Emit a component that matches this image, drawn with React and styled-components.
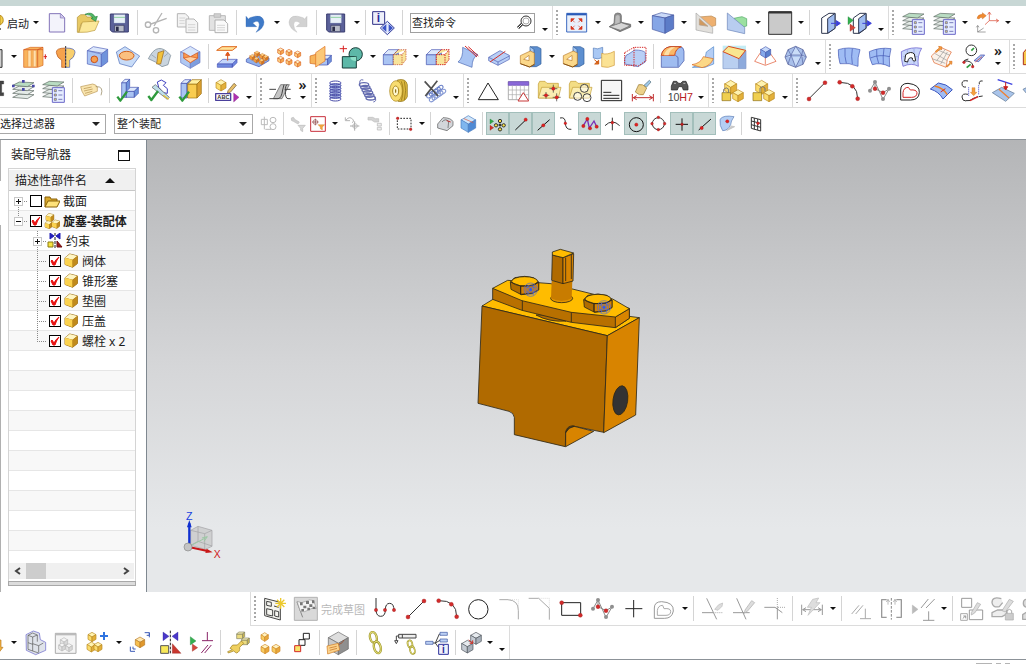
import React from "react";
import styled, { createGlobalStyle, css } from "styled-components";

const Global = createGlobalStyle`
  * { box-sizing: border-box; }
  html, body { margin: 0; }
  body, button, input, select {
    font-family: "Noto Sans", "Noto Sans CJK SC", sans-serif;
    font-size: 12px;
    color: #1c1c1c;
  }
`;

/* ---------- drawing primitives ---------- */

const P = ({ d, f = "none", s = "#333", w = 3, da }) => (
  <path d={d} fill={f} stroke={s} strokeWidth={w} strokeDasharray={da} strokeLinejoin="round" />
);
const D = ({ x, y, r = 6, c = "#d22b2b", s = "#9c1c1c" }) => (
  <circle cx={x} cy={y} r={r} fill={c} stroke={s} strokeWidth="1" />
);

const blue = ["#dde8fc", "#aac4f3", "#6f93dc", "#3f4fae"];
const yellow = ["#fff3b0", "#fbdc6c", "#e3b03a", "#b98a20"];
const orange = ["#fff0c8", "#fccf80", "#f8ab50", "#dc6c2c"];
const pale = ["#f5f5f5", "#e6e6e6", "#d8d8d8", "#b8b8b8"];
const slate = ["#e6eaee", "#c6ccd4", "#a8b0ba", "#4a5058"];

const Cube = ({ x, y, r, p = yellow, w = 2 }) => {
  const a = Math.round(r * 0.87);
  const h = Math.round(r * 0.5);
  return (
    <g stroke={p[3]} strokeWidth={w} strokeLinejoin="round">
      <path d={`M${x} ${y - r}l${a} ${h}l${-a} ${h}l${-a} ${-h}z`} fill={p[0]} />
      <path d={`M${x - a} ${y - h}l${a} ${h}v${r}l${-a} ${-h}z`} fill={p[1]} />
      <path d={`M${x + a} ${y - h}l${-a} ${h}v${r}l${a} ${-h}z`} fill={p[2]} />
    </g>
  );
};
const Block = ({ x, y, w, h, d, p = blue, k = 2 }) => (
  <g stroke={p[3]} strokeWidth={k} strokeLinejoin="round">
    <path d={`M${x} ${y + d}h${w}v${h}h${-w}z`} fill={p[1]} />
    <path d={`M${x} ${y + d}l${d} ${-d}h${w}l${-d} ${d}z`} fill={p[0]} />
    <path d={`M${x + w} ${y + d}l${d} ${-d}v${h}l${-d} ${d}z`} fill={p[2]} />
  </g>
);
const Floppy = ({ x, y }) => (
  <>
    <P d={`M${x} ${y}h54v54h-48l-6 -6z`} f="#5b6199" s="#3a3d70" />
    <P d={`M${x + 11} ${y + 2}h33v25h-33z`} f="#e8f0f8" s="#9fb0c8" w={1} />
    <P d={`M${x + 11} ${y + 10}h33`} s="#8fd0a0" />
    <P d={`M${x + 13} ${y + 34}h28v19h-28z`} f="#b8bcc8" s="#33365c" w={2} />
    <P d={`M${x + 17} ${y + 38}h8v13h-8z`} f="#2a2c48" s="none" />
  </>
);
const Layers = ({ x, y, n = 4, list }) => (
  <>
    {Array.from({ length: n }, (_, i) => n - 1 - i).map((i) => (
      <path key={i} d={`M${x - 32} ${y + i * 12}l20 -10l44 2l-20 12z`}
        fill={i === 0 ? "#b9dcc2" : "#e4ebe7"} stroke="#5a6660" strokeWidth="2" strokeLinejoin="round" />
    ))}
    {list && (
      <>
        <P d={`M${x - 3} ${y + 9}h36v44h-36z`} f="#e6edff" s="#6a67c8" />
        {[18, 31, 44].map((o) => (
          <g key={o}>
            <P d={`M${x + 3} ${y + o - 3}h6v6h-6z`} f="#f0e070" s="#55549a" w={2} />
            <P d={`M${x + 15} ${y + o}h12`} s="#44449c" w={2} />
          </g>
        ))}
      </>
    )}
  </>
);
const Folder = ({ x, y }) => (
  <>
    <P d={`M${x} ${y + 8}l4 -8h16l6 6h34v44h-60z`} f="#f3dd84" s="#c19c32" w={2} />
    <P d={`M${x} ${y + 50}l10 -32h58l-8 32z`} f="#fbeeb2" s="#c19c32" w={2} />
  </>
);
const Check = ({ x, y }) => (
  <P d={`M${x} ${y}l9 12l20 -27`} s="#2e9a3c" w={7} />
);
const RedTri = ({ x, y }) => (
  <P d={`M${x} ${y}l16 11l-16 11z`} f="#d4473c" s="#932018" w={1} />
);
const Letters = ({ x, y, size, c = "#2b2b9a", b, children }) => (
  <text x={x} y={y} fontSize={size} fill={c} stroke="none" fontWeight={b ? 700 : 400} fontFamily='"Liberation Sans", sans-serif'>{children}</text>
);
/* studio spline: a control polygon with its outer handles and two points on the curve */
const Poles = ({ x, y }) => (
  <>
    <P d={`M${x - 24} ${y + 3}L${x - 9} ${y - 23}L${x - 9} ${y - 3}L${x + 15} ${y + 9}L${x + 33} ${y - 2}M${x - 9} ${y - 23}L${x + 15} ${y + 29}L${x + 33} ${y - 2}`} s="#8a8a8a" />
    {[[-24, 3], [-9, -23], [15, 28], [33, -3]].map(([a, b]) => <D key={a} x={x + a} y={y + b} r={6} c="#8f8f8f" s="none" />)}
    {[[-9, -3], [15, 9]].map(([a, b]) => <D key={a} x={x + a} y={y + b} r={6} />)}
  </>
);
const Spring = ({ x, y, n, c = "#3c3f92", rx = 17, step = 9, tilt = 0, w = 4 }) => (
  <g fill="none" stroke={c} strokeWidth={w}>
    {Array.from({ length: n }, (_, i) => (
      <ellipse key={i} cx={x + i * tilt} cy={y + i * step} rx={rx} ry="6" />
    ))}
  </g>
);
const TrimBody = ({ x }) => (
  <>
    <P d={`M${x + 29} 140h22l11 6v46l-14 8h-19z`} f="#5d8fd0" s="#2f5c98" w={2} />
    <P d={`M${x + 29} 140l12 8v50`} f="#a8c8f0" s="#2f5c98" w={2} />
    <P d={`M${x} 167l30 -14l12 6v34l-14 8l-28 -10z`} f="#fbd88a" s="#b87a28" w={2} />
    <P d={`M${x + 10} 178l16 -12v16z`} f="#fff" s="#b87a28" w={2} />
    <P d={`M${x} 191l28 10l14 -8`} s="#8a5414" w={3} />
  </>
);
const Linked = ({ x, y, rx, ry, w }) => (
  <>
    <ellipse cx={x} cy={y} rx={rx} ry={ry} fill="none" stroke="#9a9228" strokeWidth={w} transform={`rotate(-15 ${x} ${y})`} />
    <ellipse cx={x} cy={y} rx={rx} ry={ry} fill="none" stroke="#e2dc78" strokeWidth={w / 2} transform={`rotate(-15 ${x} ${y})`} />
  </>
);

/* ---------- icons: at = centre, three units to a pixel ---------- */

const icons = {
  /* standard bar */
  new: { at: [172.5, 67.5], g: <><P d="M148 41h34l12 12v43h-46z" f="#f3f3fb" s="#8273b8" /><P d="M181 41v13h13" f="#cfc8ea" s="#8273b8" w={2} /></> },
  open: { at: [265.5, 67.5], g: <><P d="M232 52l10 -8h14l5 7h22v12l-40 8l-6 26h-5z" f="#e8c964" s="#b08f35" w={2} /><P d="M237 97l10 -31l50 -3l-12 28q-24 8 -48 6z" f="#fbe899" s="#b99738" w={2} /><P d="M255 43q22 -10 30 8l7 -2l-5 15l-14 -9l6 -2q-8 -10 -24 -10z" f="#4fb763" s="#23803a" w={2} /></> },
  save: { at: [358.5, 67.5], g: <Floppy x={331} y={42} /> },
  cut: { at: [469.5, 67.5], g: <g fill="none" stroke="#b4b4b4" strokeWidth="4"><path d="M453 72L500 55M462 78L486 39" /><circle cx="444" cy="74" r="8" /><circle cx="468" cy="91" r="8" /></g> },
  copy: { at: [562.5, 67.5], g: <><P d="M532 41h24l10 10v30h-34z" f="#f4f4f4" s="#b5b5b5" /><P d="M558 57h24l11 11v30h-35z" f="#f4f4f4" s="#b5b5b5" /><P d="M538 54h18M538 62h16M538 70h16M564 74h22M564 82h22M564 90h22" s="#c4c4c4" w={2} /></> },
  paste: { at: [655.5, 67.5], g: <><P d="M628 47h48v44h-48z" f="#e2e2e2" s="#b9b9b9" /><P d="M642 41h20v11h-20z" f="#d0d0d0" s="#b0b0b0" w={2} /><P d="M645 60h27l11 11v27h-38z" f="#fafafa" s="#b0b0b0" /><P d="M651 76h24M651 83h24M651 90h24" s="#c4c4c4" w={2} /></> },
  undo: { at: [766.5, 67.5], g: <P d="M738 49v31h32l-12 -11q18 -12 20 5q0 12 -10 23q24 -12 24 -31q-4 -27 -42 -13q-4 2 -4 5z" f="#3f7ac8" s="#2f62ae" w={1} /> },
  redo: { at: [895.5, 67.5], g: <P d="M921 49v31h-32l12 -11q-18 -12 -20 5q0 12 10 23q-24 -12 -24 -31q4 -27 42 -13q4 2 4 5z" f="#d2d2d2" s="#b4b4b4" w={1} /> },
  save2: { at: [1006.5, 67.5], g: <Floppy x={980} y={42} /> },
  command: { at: [127.5, 67.5], g: <><P d="M92 35h36v38h-36z" f="#eef0fa" s="#2e2f86" /><Letters x={104} y={66} size={36} b>i</Letters><P d="M115 84l21 -20l21 20l-21 20z" f="#e4eafc" s="#35409c" /><P d="M133 72l-13 12l13 12zM140 72l13 12l-13 12z" f="#3c55c8" s="none" /></> },
  fit: { at: [703.5, 67.5], g: <><P d="M674 40h60v56h-60z" f="#e9f0fb" s="#3d6ac0" /><P d="M675 43h58" s="#2a5ab8" w={6} /><g fill="#d83820" stroke="#d83820" strokeWidth="2"><path d="M687 56h10l-10 10zM720 56h-10l10 10zM687 88h10l-10 -10zM720 88h-10l10 -10z" /><path d="M690 59l8 8M717 59l-8 8M690 85l8 -8M717 85l-8 -8" /></g></> },
  orient: { at: [832.5, 67.5], g: <><P d="M802 80l14 -10l2 -25q0 -5 9 -6q11 0 11 8v20l28 6v8l-32 14z" f="#8e8e8e" s="#5e5e5e" w={2} /><P d="M802 80l33 11l30 -14l-27 -9z" f="#d6d6d6" s="#666" w={2} /><P d="M820 48q8 -8 14 0v20l-16 6z" f="#bdbdbd" s="#777" w={1} /></> },
  shaded: { at: [961.5, 67.5], g: <><P d="M931 47l27 -9l37 7l-26 9z" f="#cbdaf8" s="#4355a0" w={2} /><P d="M931 47l38 7v46l-38 -12z" f="#86a6e6" s="#4355a0" w={2} /><P d="M969 54l26 -9v41l-26 14z" f="#5c7cc8" s="#4355a0" w={2} /></> },
  clip: { at: [64.5, 67.5], g: <><P d="M44 51l38 -3l13 6v22l-25 8l-26 -6z" f="#eeb070" s="#b88850" w={2} /><P d="M36 39l50 44v17l-50 -10z" f="#e2e0dc" s="#a8a8a8" w={2} /><P d="M46 56l26 23l-26 -4z" f="#d09a60" s="#b0a090" w={2} /></> },
  editclip: { at: [157.5, 67.5], g: <><P d="M150 55l24 -5l14 6v22l-24 6z" f="#9be0a0" s="#4ca860" w={2} /><P d="M130 39l52 43v19l-52 -12z" f="#b8cdf0" s="#6a83b8" w={2} /></> },
  background: { at: [286.5, 67.5], g: <><P d="M254 36h69v67h-69z" f="#cacaca" s="#333" /><P d="M254 37h69" s="#333" w={7} /></> },
  exit: { at: [433.5, 67.5], g: <><P d="M413 54l22 -14h18v45l-22 15h-18z" f="#fff" s="#2f3850" /><P d="M431 56l22 -16v45l-22 15z" f="#9fbcf0" s="#2f3850" /><P d="M441 70h16m0 -8l12 8l-12 8z" f="#3a40d8" s="#3a40d8" /></> },
  enter: { at: [526.5, 67.5], g: <><P d="M508 54l20 -14h18v45l-20 15h-18z" f="#fff" s="#2f3850" /><P d="M524 56l22 -16v45l-22 15z" f="#9fbcf0" s="#2f3850" /><P d="M535 70h15m0 -8l12 8l-12 8z" f="#3a40d8" s="#3a40d8" /><P d="M492 50l16 11l-16 13z" f="#34b050" s="#187a30" w={1} /><RedTri x={498} y={72} /></> },
  layerset: { at: [685.5, 67.5], g: <Layers x={688} y={50} list /> },
  layerview: { at: [778.5, 67.5], g: <Layers x={781} y={50} list /> },
  csys: { at: [907.5, 67.5], g: <><P d="M879 55q2 -12 16 -12v-5l12 9l-12 10v-5q-8 0 -10 5z" f="#f08a30" s="#b85c10" w={1} /><P d="M916 38v24h27M916 62l-13 12M911 44l5 -8l5 8M936 57l8 5l-8 5" s="#d84028" w={2} /><P d="M881 78v18h24M881 96l18 -12M877 82l4 -6l4 6" s="#777" w={2} /></> },

  /* feature bar */
  extrude: { at: [106.5, 169.5], g: <><P d="M71 149l20 -7h38v54l-16 6h-42z" f="#f9b35c" s="#d8661c" w={2} /><P d="M84 151h9v49h-9zM100 151h8v49h-8z" f="#ffe0ac" s="#dd7a2c" w={1} /><P d="M71 149l58 0M113 149l16 -7M113 149v52" s="#cf4c1c" w={2} /><P d="M131 170h10m-5 -7v14" s="#d42020" /></> },
  revolve: { at: [199.5, 169.5], g: <><P d="M169 158q-2 -14 28 -14v58h-12v-22q-14 -6 -16 -22z" f="#f6a24c" s="#b5541a" w={2} /><P d="M225 158q2 -14 -28 -14v58h12v-22q14 -6 16 -22z" f="#f9cf6c" s="#3f58b4" w={2} /><P d="M197 138v70" s="#333" da="6 4" /></> },
  hole: { at: [292.5, 169.5], g: <><P d="M262 152l18 -12l43 8l-12 12z" f="#dde8fc" s="#4f5fb8" w={2} /><P d="M262 152l42 10v38l-42 -8z" f="#aac4f3" s="#4f5fb8" w={2} /><P d="M304 162l19 -14v38l-19 14z" f="#6f93dc" s="#4f5fb8" w={2} /><circle cx="283" cy="178" r="10" fill="#f8a050" stroke="#c8501c" strokeWidth="3" /></> },
  boss: { at: [385.5, 169.5], g: <><P d="M349 156l26 -16l44 28l-24 33l-36 -10z" f="#c8dcf8" s="#4d6cb8" w={2} /><ellipse cx="380" cy="167" rx="22" ry="13" fill="#fbc080" stroke="#d0601c" strokeWidth="3" /></> },
  flange: { at: [478.5, 169.5], g: <><P d="M445 176q28 -56 67 -10l-8 28l-18 6l-20 -14z" f="#c9d4de" s="#70808c" w={2} /><P d="M474 158l18 -6l-10 40h-12z" f="#f2c23c" s="#9a6414" w={2} /><P d="M454 164l14 10M504 160l-12 10" s="#8896a4" w={2} /></> },
  pocket: { at: [571.5, 169.5], g: <><Cube x={571} y={172} r={33} p={["#d8e6fb", "#b0c8f2", "#7e9ede", "#6878c4"]} /><P d="M551 158l20 12l22 -12v16l-22 14l-20 -14z" f="#fb9a4c" s="#d4541c" w={2} /><P d="M551 174l20 -4l22 4l-22 14z" f="#fdd0a0" s="#d4541c" w={2} /></> },
  emboss: { at: [682.5, 169.5], g: <><P d="M650 151l16 -11h45l-14 11z" f="#ffe296" s="#e06a20" /><P d="M652 192l16 -14h43l-14 14z" f="#c4d6fa" s="#4a54b8" w={2} /><P d="M652 192h45v10h-45zM697 192l14 -14v10l-14 14z" f="#6f8ae0" s="#4a54b8" w={2} /><P d="M683 182v-16m-6 0l6 -10l6 10z" f="#e8601c" s="#d8501c" /></> },
  pattern: { at: [775.5, 169.5], g: <><P d="M739 178l32 -18l36 14v8l-30 18l-38 -14z" f="#8fb0ec" s="#3f4fae" w={2} />{[[757, 172], [771, 162], [787, 169], [769, 180], [785, 185], [797, 174]].map(([x, y]) => <Cube key={x} x={x} y={y} r={9} p={["#ffd080", "#f8a040", "#d87820", "#b8601c"]} w={1} />)}</> },
  geometry: { at: [868.5, 169.5], g: <>{[[842, 154], [867, 158], [893, 163], [842, 179], [867, 185], [893, 191]].map(([x, y]) => <Cube key={`${x}${y}`} x={x} y={y} r={10} p={orange} />)}</> },
  mirror: { at: [961.5, 169.5], g: <><P d="M930 168l28 -8v34l-28 -4z" f="#f7b45a" s="#d0661c" w={2} /><Block x={957} y={166} w={26} h={18} d={11} /><P d="M947 158l28 -19v44l-28 18z" f="#fbc878" s="#e07020" w={2} /></> },
  unite: { at: [28.5, 169.5], g: <><circle cx="41" cy="163" r="20" fill="#5db8a8" stroke="#173d38" strokeWidth="3" /><P d="M1 170h42v34h-42z" f="#5db8a8" s="#173d38" /><P d="M25 172q0 10 18 12v-14z" f="#8ee0c8" s="none" /><P d="M-7 146h22m-11 -9v20" s="#d82020" /></> },
  subtract: { at: [157.5, 169.5], g: <><Block x={124} y={149} w={30} h={30} d={15} /><P d="M154 164l15 -15h23v30l-12 15h-26zM154 164h26l12 -15M180 164v30" f="#f8e49a" s="#c03a1c" w={2} da="4 3" /></> },
  intersect: { at: [286.5, 169.5], g: <><Block x={253} y={149} w={30} h={30} d={15} /><P d="M283 164l15 -15h23v30l-12 15h-26zM283 164h26l12 -15M309 164v30" f="#f8e49a" s="#d42020" w={3} da="4 3" /></> },
  trimsheet: { at: [379.5, 169.5], g: <><P d="M362 142l46 22q-18 8 -18 38l-42 -16q16 -12 14 -44z" f="#a9c4f3" s="#4a68b4" w={2} /><P d="M369 138l36 33M379 140l30 28" s="#d42828" /></> },
  splitbody: { at: [472.5, 169.5], g: <><P d="M440 172l34 -20l28 14v12l-34 18l-28 -14z" f="#b9cff6" s="#4a5cb0" w={2} /><P d="M440 172l28 14l34 -18M468 186v10" s="#4a5cb0" w={2} /><P d="M444 186l46 -32" s="#d43028" /></> },
  trimbody: { at: [565.5, 169.5], g: <TrimBody x={535} /> },
  trimextend: { at: [694.5, 169.5], g: <TrimBody x={664} /> },
  replace: { at: [787.5, 169.5], g: <><P d="M754 144q12 6 28 -2v30q-14 8 -28 2z" f="#a9c8f4" s="#5078b8" w={2} /><P d="M779 160q16 6 38 -6v42q-18 10 -38 4z" f="#fbe294" s="#cf9a3c" w={2} /><P d="M757 179l12 10m1 -8v11h-12z" f="#e87a20" s="#cf5a14" w={3} /></> },
  shell: { at: [880.5, 169.5], g: <><P d="M860 162l18 -12q26 0 32 8v28l-22 14l-40 -8v-16q4 -14 12 -14z" f="#b9cff6" s="#4a5cb0" w={2} /><P d="M848 158l28 -16h36v40l-26 18M848 158v38h38M876 142v58" s="#d42828" da="4 3" /></> },
  blend: { at: [991.5, 169.5], g: <><P d="M958 166q4 -22 26 -26h30q12 2 12 14v28l-16 20h-52z" f="#9fbcf0" s="#3e4fa0" w={2} /><P d="M958 166q4 -22 26 -26h34q-18 6 -20 26z" f="#fbb868" s="#d04a1c" /><P d="M966 166q4 -16 22 -24h12q-18 8 -20 24z" f="#fde0a8" s="none" /><P d="M1000 166l8 6v28" s="#3e4fa0" w={2} /></> },
  blend2: { at: [58.5, 169.5], g: <><P d="M89 140v52l-26 10h-38q40 -10 42 -46z" f="#b4cdf5" s="#4d86c8" w={2} /><P d="M24 194q26 -4 34 -24l30 6q-8 22 -34 27z" f="#fcd886" s="#d8661c" w={2} /></> },
  chamfer: { at: [151.5, 169.5], g: <><P d="M116 137h70v69h-70z" f="#c4ecf4" s="none" /><P d="M117 155l47 16v35h-47z" f="#b9cff0" s="#8a9cc8" w={2} /><P d="M164 172l22 -20v54h-22z" f="#8daadc" s="#8a9cc8" w={2} /><P d="M117 155l16 -16l52 12l-20 25z" f="#f9e690" s="#d84a20" /></> },
  draft: { at: [244.5, 169.5], g: <><P d="M212 184l20 -30M276 184l-22 -30M212 184l32 12l32 -12M244 160v34" s="#e05028" w={2} /><Cube x={245} y={157} r={17} p={["#c7dafa", "#86a9ea", "#5a7fcc", "#4a5cb0"]} /></> },
  facet: { at: [337.5, 169.5], g: <><P d="M335 139l22 10l10 22l-10 22l-22 9l-23 -9l-9 -22l9 -22z" f="#a9c0ea" s="#44508c" w={2} /><P d="M335 139l-14 26l14 37l18 -37zM303 171l18 -6h32l14 6M312 149l9 16M357 149l-4 16M312 193l9 -28M357 193l-4 -28" f="#c9dcf8" s="#5460a0" w={2} /></> },
  ruled: { at: [496.5, 169.5], g: <><P d="M463 149q30 -10 65 0q-8 24 -6 50q-26 -12 -54 -8q-6 -22 -5 -42z" f="#9fbcf4" s="#3d52b0" w={2} /><P d="M483 146q-2 24 4 44M505 146q-4 24 0 46" s="#3d52b0" w={2} /></> },
  mesh: { at: [589.5, 169.5], g: <><P d="M556 155q30 -14 65 -9q-8 26 -4 54q-26 -14 -52 -6q-10 -20 -9 -39z" f="#9fbcf4" s="#3d52b0" w={2} /><P d="M578 148q-2 22 6 42M600 145q-4 26 -2 48M559 174q28 -12 58 -4" s="#3d52b0" w={2} /></> },
  nsided: { at: [682.5, 169.5], g: <><P d="M652 155q30 -16 61 -10q-14 22 -10 54q-20 -12 -46 0q-6 -20 -5 -44z" f="#c9d6fa" s="#5a4fc8" w={2} /><P d="M658 170h46M670 150v44M690 146v46" s="#8a9ce0" w={2} /><P d="M662 184l3 -20q16 -12 26 -2l4 20q-10 4 -10 -8q-12 -4 -14 12z" f="#fff" s="#222" /></> },
  enlarge: { at: [775.5, 169.5], g: <><P d="M742 168l28 -26l32 14q-16 22 -16 46l-36 -14z" f="#fbf2ea" s="#e0642c" w={2} /><P d="M752 160l38 22M762 150l36 16M758 182l26 -34M770 192l20 -36M744 176l40 14" s="#999" w={2} /><P d="M754 154l12 -10l-2 -5l10 2l-2 9l-3 -3l-12 10zM786 199l12 -10l-2 -5l8 0l-1 9l-3 -2l-10 10z" f="#f4a040" s="#d87020" w={2} /></> },
  xform: { at: [868.5, 169.5], g: <><circle cx="862" cy="151" r="16" fill="none" stroke="#333" strokeWidth="3" /><P d="M862 152l8 -8" s="#2b9a3c" w={5} /><P d="M837 189q2 -10 16 -12M840 183q26 -2 27 17" s="#333" /><D x={840} y={187} r={4} /><D x={866} y={200} r={4} /><P d="M848 203l12 -10" s="#2b9a3c" w={5} /><P d="M870 182l20 -17h12l-18 20z" f="#aac4f3" s="#3d42a8" w={2} /><P d="M874 186l20 -16" s="#d43020" w={2} /></> },
  cutoff: { at: [1048.5, 169.5], g: <P d="M1018 158l12 -14v50h-12z" f="#f8c84c" s="#a83020" /> },

  /* layer bar */
  layers: { at: [70.5, 271.5], g: <><Layers x={70} y={256} /><P d="M66 240h8v8h-8zM36 254h8v8h-8zM96 254h8v8h-8zM66 264h8v8h-8z" f="#4848a8" s="none" /></> },
  layercat: { at: [163.5, 271.5], g: <Layers x={160} y={254} list /> },
  tag: { at: [274.5, 271.5], g: <><P d="M242 260l36 -8q12 2 14 10v12l-38 14q-10 -14 -12 -28z" f="#fae6b0" s="#b89450" w={2} /><P d="M251 266l24 -5M252 273l26 -6M255 280l22 -6" s="#b08c48" w={2} /><P d="M287 260q26 -2 16 26" s="#8a7a50" w={2} /></> },
  block: { at: [385.5, 271.5], g: <><Block x={365} y={238} w={14} h={44} d={10} /><Block x={379} y={262} w={24} h={18} d={12} /><Check x={352} y={290} /></> },
  sketchcheck: { at: [478.5, 271.5], g: <><P d="M472 246l12 -6l14 8l-8 8l12 10v14l-12 -2l-14 -16z" f="#fff" s="#3d3fc0" /><P d="M456 262l10 -8l42 38l-6 6z" f="#bfe0ea" s="#555" w={2} /><P d="M490 286l16 12" s="#e8c030" w={4} /><Check x={445} y={288} /></> },
  partcheck: { at: [571.5, 271.5], g: <><Block x={543} y={239} w={18} h={44} d={11} /><Block x={563} y={239} w={28} h={42} d={13} p={["#fff0a2", "#f9cc50", "#dba030", "#9a7010"]} /><Check x={538} y={290} /></> },
  annot: { at: [682.5, 271.5], g: <><Cube x={663} y={256} r={17} /><P d="M684 272l18 -22l7 6l-18 21l-9 3z" f="#e8c06a" s="#6b5530" w={2} /><P d="M647 281h45v20h-45z" f="#fff" s="#4a3f9c" w={4} /><Letters x={652} y={298} size={17} b c="#333">ABC</Letters><P d="M701 279l16 13l-16 14z" f="#b030b0" s="#7a1c80" w={1} /></> },
  plane: { at: [841.5, 271.5], g: <><P d="M820 296l22 -42h26l-22 42z" f="#c4c4c4" s="#555" w={2} /><P d="M808 296h26q10 0 14 -26l4 -16M862 254q-6 0 -6 20q0 22 8 22h8M808 268h20M854 268h18" s="#444" w={3} /></> },
  coil: { at: [-19.5, 271.5], g: <><P d="M-37 250h34v46h-34z" f="#b4c2ec" s="none" /><Spring x={-20} y={249} n={7} step={8} w={3} c="#4a4ea8" /></> },
  spring: { at: [73.5, 271.5], g: <><Spring x={66} y={254} n={6} rx={14} step={8} tilt={4} c="#646cb0" /><P d="M54 254q-4 -18 10 -14M98 290q8 14 -4 16" s="#646cb0" /></> },
  wheel: { at: [166.5, 271.5], g: <><P d="M166 240q26 -6 30 14v36q-8 18 -28 14z" f="#dcb840" s="#8a6c10" w={2} /><ellipse cx="162" cy="273" rx="19" ry="31" fill="#f7dc70" stroke="#a8841c" strokeWidth="2" /><ellipse cx="161" cy="273" rx="9" ry="15" fill="#fff8d0" stroke="#a8841c" strokeWidth="3" /><ellipse cx="161" cy="273" rx="2" ry="6" fill="#8a6c10" /><P d="M178 244q10 26 0 58M187 244q8 26 0 56" s="#8a6c10" w={2} /></> },
  springdel: { at: [277.5, 271.5], g: <><g transform="rotate(-35 282 280)"><Spring x={262} y={274} n={5} step={0} tilt={10} rx={9} c="#6a80c8" w={3} /><Spring x={262} y={288} n={5} step={0} tilt={10} rx={9} c="#8498d4" w={3} /></g><P d="M248 244l40 44M286 242l-36 46" s="#505050" w={5} /></> },
  datum: { at: [436.5, 271.5], g: <P d="M438 249l31 50h-60z" s="#222" /> },
  table: { at: [529.5, 271.5], g: <><P d="M499 245h61v54h-61z" f="#fff" s="#888" w={2} /><P d="M499 245h61v11h-61z" f="#8a68d8" s="#6a48b8" w={2} /><P d="M499 270h61M499 284h61M511 256v43M523 256v43M535 256v43M547 256v43" s="#aaa" w={2} /><P d="M544 278l16 25h-32z" f="#fff" s="#c83838" /></> },
  folderpts: { at: [622.5, 271.5], g: <><Folder x={589} y={244} /><P d="M602 286h20m-10 -10v20M622 266h24m-12 -12v24M632 292h24m-12 -12v24" s="#333" w={2} /><D x={634} y={266} r={5} c="#e02020" /><D x={612} y={286} r={5} c="#e02020" /><D x={644} y={292} r={5} c="#e02020" /></> },
  foldercirc: { at: [715.5, 271.5], g: <><Folder x={682} y={244} /><g fill="#fff" fillOpacity="0.5" stroke="#444" strokeWidth="3"><circle cx="727" cy="265" r="12" /><circle cx="707" cy="289" r="12" /><circle cx="735" cy="293" r="12" /></g></> },
  note: { at: [808.5, 271.5], g: <><P d="M778 241h61v61h-61z" f="#f6f6f6" s="#222" /><P d="M784 277h24M784 286h48M784 295h48" s="#222" /></> },
  brush: { at: [901.5, 271.5], g: <><P d="M906 256l16 -15l5 5l-14 16z" f="#9fc8e8" s="#55707c" w={2} /><P d="M890 254q12 -4 24 10l-10 20q-12 4 -24 -8z" f="#ecd08a" s="#96752c" w={2} /><P d="M871 282v22M934 282v22M874 293h58M884 287l-10 6l10 6M922 287l10 6l-10 6" s="#c02c2c" /></> },
  fits: { at: [1012.5, 271.5], g: <><P d="M988 258l6 -14h10l6 6h6l6 -6h10l6 14v12h-14l-4 -10h-10l-4 10h-18z" f="#555" s="#222" w={2} /><P d="M996 250l6 0M1024 250l6 0" s="#bbb" /><Letters x={977} y={304} size={32} c="#444">10</Letters><Letters x={1012} y={304} size={32} c="#b82020">H7</Letters></> },
  lockA: { at: [145.5, 271.5], g: <><Cube x={140} y={262} r={21} /><Cube x={162} y={287} r={18} /><P d="M114 278h26v24h-26z" f="#f0cf50" s="#8a6a14" w={2} /><P d="M119 278v-10q8 -9 15 0v10" s="#777" /></> },
  lockB: { at: [238.5, 271.5], g: <><Cube x={233} y={262} r={21} /><Cube x={255} y={287} r={18} /><P d="M207 278h26v24h-26z" f="#f0cf50" s="#8a6a14" w={2} /><P d="M228 276v-12q8 -9 15 0v10" s="#777" /></> },
  line: { at: [397.5, 271.5], g: <><P d="M375 296l48 -48" s="#333" /><D x={375} y={297} /><D x={423} y={248} /></> },
  arc: { at: [490.5, 271.5], g: <><P d="M467 247q54 0 54 49" s="#333" /><D x={467} y={247} /><D x={505} y={259} /><D x={521} y={296} /></> },
  spline: { at: [583.5, 271.5], g: <Poles x={582} y={269} /> },
  offsetcurve: { at: [676.5, 271.5], g: <><P d="M650 270q0 -20 22 -20q36 4 34 28q-2 22 -26 22h-30z" s="#222" /><P d="M657 292v-14q2 -16 16 -16l6 8q18 -2 20 8q0 14 -16 14z" s="#d42828" /></> },
  sheetA: { at: [769.5, 271.5], g: <><P d="M739 267l24 -18q24 2 42 20l-28 28q-12 -22 -38 -30z" f="#9fbcf4" s="#3a55c0" w={3} /><P d="M752 258q26 6 38 26" s="#f08020" w={4} /><P d="M770 276l14 -10" s="#d42828" w={3} /></> },
  sheetB: { at: [862.5, 271.5], g: <><P d="M852 243q-18 -4 -18 8q0 12 12 10M852 283q-18 -4 -18 8q0 12 12 12M896 243q-12 -2 -10 10M846 302q14 2 20 -6l16 -6M884 290l12 -2" s="#333" /><P d="M854 262v26M884 256v30" s="#3a3fc8" da="3 3" /><P d="M864 263h9v14h6l-10 10l-10 -10h5z" f="#f4a040" s="#c86a18" w={1} /><P d="M858 302l24 -12" s="#d42828" w={4} /></> },
  sheetC: { at: [955.5, 271.5], g: <><P d="M941 239l44 14" s="#3a3fe0" w={4} /><P d="M925 278l28 -16l38 18l-26 24z" f="#a9c4ea" s="#58708c" w={2} /><P d="M945 268l30 26" s="#f08030" w={4} /><P d="M965 246v14m-6 0l6 10l6 -10z" f="#c82020" s="#c82020" /></> },
  sheetD: { at: [1048.5, 271.5], g: <P d="M1017 268l12 -6v20z" f="#a9c4ea" s="#58708c" w={2} /> },

  /* selection bar */
  selA: { at: [808.5, 370.5], g: <g stroke="#bbb" fill="none" strokeWidth="3"><path d="M784 358h18v16h-18zM793 350v38" /><ellipse cx="819" cy="360" rx="9" ry="8" /><ellipse cx="819" cy="380" rx="9" ry="9" /><path d="M796 388h18" /></g> },
  selB: { at: [889.5, 370.5], g: <><P d="M874 354q8 -6 10 4l14 8l-4 6l-14 -8q-8 0 -6 -10z" f="#d0d0d0" s="#c0c0c0" w={2} /><P d="M894 376h22l-8 9v10l-6 -4v-6z" f="#d8d8d8" s="#b8b8b8" w={2} /></> },
  selC: { at: [952.5, 370.5], g: <><P d="M932 350h44v44h-44z" f="#fff" s="#c8303c" /><circle cx="946" cy="366" r="7" fill="none" stroke="#a06060" strokeWidth="2" /><P d="M936 366h20m-10 -10v20" s="#803030" w={2} /><P d="M954 374h20l-7 7v9l-6 -4v-5z" f="#f5a63c" s="#c2701c" w={1} /></> },
  selD: { at: [31.5, 370.5], g: <><P d="M10 362h14M10 362v-10M12 360q12 -14 22 0q2 6 -4 8" s="#b4b4b4" /><circle cx="39" cy="378" r="7" fill="none" stroke="#aaa" strokeWidth="2" /><P d="M24 378h28m-14 -14v28" s="#aaa" w={3} /></> },
  selE: { at: [100.5, 370.5], g: <><P d="M78 352h14l8 4h10v10h-12l-10 -6h-10z" f="#d4d4d4" s="#bbb" w={2} /><P d="M106 370h12v8h-12zM106 382h12v8h-12z" f="#eee" s="#b4b4b4" w={2} /></> },
  marquee: { at: [187.5, 370.5], g: <><P d="M166 355h41v32h-41z" s="#222" da="5 4" /><D x={167} y={355} r={4} /><D x={206} y={388} r={4} /></> },
  solid: { at: [310.5, 370.5], g: <><P d="M287 372l16 -19q24 0 30 12v12l-18 15l-28 -8z" f="#d3d6da" s="#555" w={2} /><P d="M300 366q10 -12 20 -2l-2 20" s="#555" w={2} /><P d="M314 362l12 4" s="#c03030" w={3} /></> },
  face: { at: [379.5, 370.5], g: <><Cube x={379} y={372} r={25} p={["#cfe6fa", "#7fb6ee", "#4f8ad4", "#4a7cc0"]} /><P d="M366 356l28 12" s="#e05030" w={2} /></> },
  snapAll: { at: [466.5, 370.5], g: <><P d="M444 357l11 7l-11 8z" f="#2fa848" s="#157a2c" w={1} /><P d="M444 376l11 7l-11 8z" f="#d43028" s="#932018" w={1} /><g fill="#f8e040" stroke="#333" strokeWidth="3"><circle cx="474" cy="363" r="5" /><circle cx="462" cy="376" r="5" /><circle cx="485" cy="376" r="5" /><circle cx="474" cy="388" r="5" /></g><D x={474} y={375} r={4} c="#333" s="#333" /></> },
  snapEnd: { at: [535.5, 370.5], g: <><P d="M520 390l32 -31" s="#111" /><D x={551} y={359} r={5} c="#e02020" /></> },
  snapMid: { at: [604.5, 370.5], g: <><P d="M587 391l36 -32" s="#111" /><D x={604} y={376} r={5} c="#e02020" /></> },
  snapPole: { at: [673.5, 370.5], g: <><P d="M654 354q16 -4 16 14q0 22 18 20" s="#333" /><D x={670} y={370} r={4} c="#e02020" /></> },
  snapKnot: { at: [742.5, 370.5], g: <><polyline points="724,377 736,357 742,384 756,363 764,380" fill="none" stroke="#7a30b8" strokeWidth="4" />{[[724, 378], [736, 357], [744, 385], [764, 380]].map(([x, y]) => <D key={x} x={x} y={y} r={5} c="#e02020" />)}</> },
  snapInt: { at: [811.5, 370.5], g: <><P d="M789 377q22 -22 44 0M811 353v38" s="#333" /><D x={811} y={368} r={4} c="#e02020" /></> },
  snapCenter: { at: [880.5, 370.5], g: <><circle cx="883" cy="374" r="21" fill="none" stroke="#111" strokeWidth="3" /><D x={883} y={374} r={5} c="#e02020" /></> },
  snapQuad: { at: [949.5, 370.5], g: <><circle cx="949" cy="371" r="18" fill="none" stroke="#333" strokeWidth="3" /><D x={949} y={352} r={4} /><D x={949} y={389} r={4} /><D x={930} y={371} r={4} /><D x={968} y={371} r={4} /></> },
  snapPoint: { at: [1018.5, 370.5], g: <><P d="M1001 373h37M1020 355v37" s="#111" /><D x={1020} y={373} r={4} c="#c02020" /></> },
  snapCurve: { at: [61.5, 370.5], g: <><P d="M44 390l37 -33" s="#111" /><D x={53} y={384} r={5} c="#e02020" /></> },
  snapFace: { at: [130.5, 370.5], g: <><P d="M108 358q10 -14 42 -8q-10 14 -10 24q-8 18 -24 18q-10 -14 -8 -34z" f="#b4cef4" s="#5a7cb4" w={2} /><P d="M128 392l14 -14l10 2z" f="#ccc" s="#bbb" w={2} /><D x={130} y={364} r={5} c="#e02020" /></> },
  snapGrid: { at: [217.5, 370.5], g: <><P d="M202 352l28 7v34l-28 -8zM202 363l28 7M202 374l28 8M211 354v34M221 357v33" s="#333" w={3} /><D x={222} y={370} r={4} c="#e02020" /></> },

  /* sketch bar */
  sketch: { at: [73.5, 55.5], g: <><P d="M44 25l47 12v53l-47 -13z" f="#f5f5f0" s="#444" /><P d="M50 34l14 3v12l-14 -3zM50 56l18 4v18l-18 -4zM72 48l14 4M74 62l12 3v16l-12 -3z" s="#444" /><P d="M92 24v32M76 40h32M81 29l22 22M103 29l-22 22" s="#ecc92c" w={4} /></> },
  flag: { at: [166.5, 55.5], g: <><P d="M133 22h69v69h-69z" f="#d9d9d9" s="#b3b3b3" /><P d="M141 36l17 46" s="#888" /><P d="M141 34q14 8 26 0t24 -2l8 24q-14 -4 -24 4t-24 4z" f="#f4f4f4" s="#999" w={2} /><P d="M150 37h8v9h-8zM168 33h9v9h-9zM186 31h7v9h-7zM160 47h9v8h-9zM178 43h9v8h-9zM154 57h8v7h-8zM172 53h8v8h-8zM188 50h8v7h-8z" f="#777" s="none" /></> },
  profile: { at: [403.5, 55.5], g: <><P d="M378 24v38q2 17 14 17q14 0 14 -19q0 -20 13 -20q13 0 13 22" s="#333" /><D x={378} y={60} r={5} /><D x={405} y={60} r={5} /><D x={432} y={60} r={5} /></> },
  sline: { at: [496.5, 55.5], g: <><P d="M474 81l48 -48" s="#333" /><D x={474} y={81} /><D x={522} y={33} /></> },
  sarc: { at: [589.5, 55.5], g: <><P d="M566 32q54 -2 54 48" s="#333" /><D x={566} y={32} /><D x={604} y={43} /><D x={620} y={80} /></> },
  circle: { at: [682.5, 55.5], g: <circle cx="685" cy="58" r="29" fill="none" stroke="#222" strokeWidth="3" /> },
  fillet: { at: [775.5, 55.5], g: <><P d="M748 29h26q31 2 31 32v27" s="#aaa" /><P d="M774 29h31v32" s="#ccc" w={2} da="3 3" /></> },
  schamfer: { at: [868.5, 55.5], g: <><P d="M836 25h30l32 30v34" s="#aaa" /><P d="M866 25h32v30" s="#ccc" w={2} da="3 3" /></> },
  rect: { at: [961.5, 55.5], g: <><P d="M935 38h57v38h-57z" s="#222" /><D x={935} y={38} /><D x={991} y={76} /></> },
  sspline: { at: [1054.5, 55.5], g: <Poles x={1053} y={53} /> },
  plus: { at: [1147.5, 55.5], g: <P d="M1126 56h51M1151 30v52" s="#222" /> },
  offset: { at: [82.5, 55.5], g: <><P d="M55 54q0 -19 22 -19q37 2 35 28q-4 22 -26 22h-31z" s="#999" /><P d="M64 76v-14q2 -16 16 -16l4 10q20 -2 20 8q0 12 -14 12z" s="#aaa" /></> },
  trim: { at: [229.5, 55.5], g: <><P d="M198 68h34M212 25l30 63" s="#999" /><P d="M232 68h30" s="#aaa" da="3 3" /><P d="M236 58l12 -14l12 -5l-2 10l-12 12z" f="#ddd" s="#bbb" w={2} /></> },
  extend: { at: [322.5, 55.5], g: <><P d="M291 68h50M302 25l28 63" s="#999" /><P d="M327 60l20 -28l9 6l-22 26l-9 6z" f="#ddd" s="#aaa" w={2} /></> },
  corner: { at: [415.5, 55.5], g: <><P d="M385 52h32l22 16M424 52v36" s="#999" /><P d="M424 24v28h26" s="#aaa" da="3 3" /></> },
  rapid: { at: [526.5, 55.5], g: <><P d="M497 44v31M559 44v31M500 59h56M510 53l-10 6l10 6M546 53l10 6l-10 6" s="#999" /><P d="M530 28l18 -4l-8 14h12l-36 38l10 -24h-12z" f="#ddd" s="#bbb" w={2} /></> },
  constr: { at: [673.5, 55.5], g: <P d="M647 72l22 -26M659 72l22 -26M688 56v30M672 86h33" s="#aaa" /> },
  symmetric: { at: [766.5, 55.5], g: <><P d="M752 29h-15v53h15M781 29h15v53h-15" s="#999" w={4} /><P d="M766 24v65" s="#888" da="8 4" /><P d="M756 44v-16m-5 8l5 -8l5 8M777 44v-16m-5 8l5 -8l5 8" s="#999" w={2} /></> },
  showconstr: { at: [859.5, 55.5], g: <><P d="M829 45l17 13l-17 13z" f="#bbb" s="#aaa" w={1} /><P d="M855 54l22 -27M870 54l26 -27M878 64v27M861 91h34" s="#999" /></> },
  editA: { at: [1006.5, 55.5], g: <><P d="M977 25h30v27h-30zM1000 60h40v29h-40z" f="#fff" s="#999" /><P d="M974 71h20v20h-20z" f="#fff" s="#aaa" /><P d="M980 86l8 -8m-6 0h7v7" s="#999" /><P d="M1006 68l18 -30l10 5l-18 26l-10 6z" f="#ddd" s="#aaa" w={2} /></> },
  editB: { at: [1099.5, 55.5], g: <><P d="M1096 26q-28 -8 -28 12q2 16 22 12l10 -12M1068 68l16 -8h28v12l-14 8h-30z" f="#eee" s="#aaa" w={4} /><P d="M1098 62l22 -34l12 6l-24 32z" f="#ddd" s="#aaa" w={2} /><P d="M1108 70h24v20h-24z" f="#ccc" s="#aaa" w={2} /><P d="M1113 70v-8q8 -8 14 0v8" s="#aaa" /></> },
  editC: { at: [1192.5, 55.5], g: <P d="M1176 28q-14 -2 -14 12q0 12 14 12M1160 74l12 -8v22h-12z" f="#ddd" s="#aaa" w={4} /> },

  /* assembly bar */
  wire: { at: [106.5, 427.5], g: <><P d="M78 404l22 -11l18 6l3 20l16 8v24l-30 13l-28 -13z" f="#dfe3ea" s="#6460c8" w={2} /><P d="M84 406l14 5v42l-14 -5zM98 411l14 -6v20M98 431l18 6l14 -8M116 437v20M84 428l14 5M98 453l18 6M84 406l14 -7l14 6" s="#555" w={2} /></> },
  window: { at: [199.5, 427.5], g: <><P d="M166 400h62v60h-62z" f="#f4f4f4" s="#aaa" /><P d="M166 403h62" s="#bbb" w={6} /><Cube x={192} y={426} r={13} p={pale} /><Cube x={186} y={441} r={12} p={pale} /><Cube x={207} y={443} r={12} p={pale} /></> },
  add: { at: [292.5, 427.5], g: <><Cube x={276} y={411} r={14} /><Cube x={274} y={441} r={15} /><Cube x={294} y={441} r={14} /><P d="M300 408h24m-12 -12v24" s="#2f74e0" w={6} /></> },
  move: { at: [421.5, 427.5], g: <><Cube x={420} y={427} r={16} p={["#ffe8b0", "#f8c050", "#e0982c", "#b87c28"]} /><P d="M434 398h14v14M440 406h8v-8M391 440v14h14M399 440v7h8" s="#3d5db8" w={3} /></> },
  mirrorasm: { at: [514.5, 427.5], g: <><P d="M489 396v26l18 -13zM534 396v26l-18 -13z" f="#4a38c8" s="#2c1f98" w={1} /><P d="M511 392v72" s="#222" da="8 4" /><P d="M482 437h24v23h-24z" f="#f8e858" s="#555" /><P d="M517 431v29h26z" f="#c83830" s="#8a1c18" w={1} /></> },
  asmconstr: { at: [607.5, 427.5], g: <><P d="M571 410l17 13l-17 12z" f="#34b050" s="#187a30" w={1} /><RedTri x={577} y={432} /><P d="M622 396v26M606 422h33M604 459l20 -24M614 459l20 -24" s="#8a2468" /></> },
  wrench: { at: [718.5, 427.5], g: <><Block x={710} y={396} w={18} h={14} d={6} p={["#fbf2b8", "#ecdc80", "#cdb850", "#808060"]} /><Block x={724} y={414} w={18} h={14} d={6} p={["#fbf2b8", "#ecdc80", "#cdb850", "#808060"]} /><P d="M690 445l8 -10h14l12 -12l7 7l-12 12q2 14 -10 17l-8 -6l-16 6l-2 -4l14 -6z" f="#efd060" s="#9a7a18" w={2} /></> },
  scatter: { at: [61.5, 157.5], g: <><Cube x={44} y={141} r={13} p={["#fff2c0", "#f8cc60", "#e8a83c", "#d08a28"]} /><Cube x={45} y={177} r={14} p={["#fff2c0", "#f8cc60", "#e8a83c", "#d08a28"]} /><Cube x={78} y={177} r={14} p={["#fff2c0", "#f8cc60", "#e8a83c", "#d08a28"]} /></> },
  sequence: { at: [154.5, 157.5], g: <><P d="M160 130h18v17h-18zM147 149h18v17h-18z" f="#fff" s="#222" /><P d="M134 167h18v18h-18z" f="#f8e468" s="#d42828" /></> },
  product: { at: [265.5, 157.5], g: <><Cube x={265} y={160} r={34} p={["#dedede", "#c8c8c8", "#8f8f8f", "#666"]} /><P d="M231 168l34 -8l4 20l-36 12z" f="#fbd28a" s="#d07a20" w={2} /><P d="M238 174l22 -5M239 181l22 -6" s="#c06820" w={2} /><P d="M266 164q12 -4 16 -14" s="#a04018" w={2} /></> },
  chain: { at: [376.5, 157.5], g: <><Linked x={370} y={142} rx={10} ry={16} w={7} /><Linked x={382} y={172} rx={10} ry={18} w={7} /></> },
  link: { at: [469.5, 157.5], g: <><P d="M446 133h52v11h-52zM457 133v11" f="#eee" s="#444" /><P d="M446 138h-7v14m-5 0l5 9l5 -9z" s="#444" /><Linked x={480} y={162} rx={7} ry={11} w={5} /><Linked x={487} y={180} rx={7} ry={12} w={5} /></> },
  relations: { at: [562.5, 157.5], g: <><P d="M548 159h8l12 -27h4M556 159l14 -8h4M556 159l10 14" s="#444" w={3} /><P d="M527 154h22v9h-22zM570 127h22v9h-22zM570 147h22v9h-22z" f="#bcd0f4" s="#3b55a0" w={2} /><P d="M566 163h29v30h-29z" f="#f0f2fc" s="#2b2f9c" /><Letters x={576} y={189} size={30} b>i</Letters></> },
  clearance: { at: [664.5, 157.5], g: <><Cube x={678} y={145} r={18} p={slate} /><Cube x={652} y={170} r={19} p={slate} /><P d="M656 150l12 10m0 -9v9h-9" s="#d03028" /></> },
};

/* icons that the window edge cuts through */
const edges = {
  square: { mid: 169.5, g: <P d="M-10 149h16v53h-16z" f="#cfcfcf" s="#333" /> },
  beam: { mid: 271.5, g: <P d="M-2 243h13v9h-6v26h6v9h-13z" f="#444" s="#222" w={1} /> },
  arrow: { mid: 427.5, g: <P d="M-4 420h7v22h6l-11 14z" f="#f0b040" s="#b87820" w={2} /> },
};

/* ---------- controls ---------- */

const Shell = styled.div`
  display: flex;
  flex-direction: column;
  min-height: 100vh;
  background: #fff;
  overflow: hidden;
`;
const TopStrip = styled.div`
  height: 6px;
  background: #c8d7d5;
`;
const Bar = styled.div`
  display: flex;
  align-items: stretch;
  flex: none;
  height: ${(p) => (p.$compact ? 32 : 34)}px;
  border-bottom: 1px solid ${(p) => (p.$strong ? "#8c9298" : "#dcdcdc")};
  overflow: hidden;
  font-size: 11px;
`;
const SketchBar = styled(Bar)`
  margin-left: 250px;
  border-left: 1px solid #dcdcdc;
`;
const EdgeIcon = styled.svg`
  flex: none;
  align-self: center;
`;
const Tool = styled.button`
  display: flex;
  align-items: center;
  justify-content: center;
  flex: none;
  width: ${(p) => p.$width}px;
  padding: 0;
  border: 0;
  background: transparent;
  svg { flex: none; display: block; overflow: visible; }
  ${(p) => p.$on && css`
    align-self: center;
    height: 23px;
    background: #c8d8d6;
    box-shadow: inset 0 0 0 1px #a3bfbb;
  `}
`;
const Drop = styled.button`
  display: flex;
  align-items: center;
  justify-content: center;
  flex: none;
  width: 12px;
  padding: 0;
  border: 0;
  background: transparent;
  &::after {
    content: "";
    border: 3px solid transparent;
    border-top-color: #111;
    border-bottom: 0;
  }
`;
const End = styled.div`
  display: flex;
  flex-direction: column;
  justify-content: flex-end;
  align-items: center;
  flex: none;
  width: ${(p) => p.$width}px;
  padding: 0 2px 7px 0;
  border-right: 1px solid #dcdcdc;
  ${Drop} { height: 5px; }
`;
const Chevron = styled.span`
  font-size: 14px;
  font-weight: 600;
  line-height: 20px;
`;
const Grip = styled.span`
  flex: none;
  width: 8px;
  margin: 4px 0;
  background: repeating-linear-gradient(#a8a8a8 0 2px, transparent 2px 4px) 3px 0 / 2px 100% no-repeat;
`;
const Rule = styled.span`
  flex: none;
  width: 6px;
  margin: 4px 0;
  background: linear-gradient(#d4d4d4, #d4d4d4) 2px 0 / 1px 100% no-repeat;
`;
const StartButton = styled.button`
  display: flex;
  align-items: center;
  flex: none;
  width: 30px;
  padding: 0;
  border: 0;
  background: transparent;
  font-size: 11px;
  gap: 3px;
  white-space: nowrap;
  svg { flex: none; }
`;
const SearchBox = styled.label`
  display: flex;
  align-items: center;
  align-self: center;
  flex: none;
  width: 125px;
  height: 20px;
  margin: 0 4px;
  border: 1px solid #a0a0a0;
  input {
    flex: 1;
    min-width: 0;
    padding: 0 1px;
    border: 0;
    outline: 0;
    font-size: 11px;
    background: transparent;
  }
  input::placeholder { color: #1c1c1c; opacity: 1; }
`;
const Combo = styled.div`
  display: flex;
  align-items: center;
  align-self: center;
  flex: none;
  width: ${(p) => p.$width}px;
  height: 20px;
  margin-right: ${(p) => p.$after}px;
  border: 1px solid #a8a8a8;
  border-left-width: ${(p) => (p.$open ? 0 : 1)}px;
  select {
    appearance: none;
    flex: 1;
    width: 100%;
    height: 18px;
    padding: 0 0 0 ${(p) => (p.$open ? 0 : 2)}px;
    border: 0;
    background: transparent;
    font-size: 11px;
  }
  &::after {
    content: "";
    margin-right: 5px;
    border: 4px solid transparent;
    border-top-color: #222;
    border-bottom: 0;
    pointer-events: none;
  }
`;
const SketchLabel = styled.button`
  flex: none;
  width: 48px;
  padding: 0;
  border: 0;
  background: transparent;
  font-size: 11px;
  text-align: left;
  color: #b8b8b8;
`;

const Icon = ({ name, size }) => {
  const { at, g } = icons[name];
  const half = size * 1.5;
  return (
    <svg width={size} height={size} viewBox={`${at[0] - half} ${at[1] - half} ${size * 3} ${size * 3}`} aria-hidden="true">{g}</svg>
  );
};
const Edge = ({ name }) => (
  <EdgeIcon width="8" height="25" viewBox={`0 ${edges[name].mid - 37.5} 24 75`} aria-hidden="true">{edges[name].g}</EdgeIcon>
);

const Tools = ({ items, compact }) =>
  items.split(" ").map((item, i) => {
    if (item === "|") return <Rule key={i} />;
    if (item === "v") return <Drop key={i} aria-label="更多选项" />;
    if (item === "grip") return <Grip key={i} />;
    if (item === "end") return <End key={i} $width={14}><Drop aria-label="工具条选项" /></End>;
    if (item === "more" || item === "more+")
      return <End key={i} $width={item === "more" ? 16 : 21}><Chevron>»</Chevron><Drop aria-label="工具条选项" /></End>;
    const narrow = item.endsWith("-");
    const on = item.startsWith("*");
    const name = item.replace(/[*-]/g, "");
    const width = compact ? (narrow ? 19 : 23) : narrow ? 25 : 31;
    return (
      <Tool key={i} $width={width} $on={on} aria-label={name} aria-pressed={on || undefined}>
        <Icon name={name} size={compact ? 23 : 25} />
      </Tool>
    );
  });

/* ---------- navigator ---------- */

const Work = styled.main`
  display: flex;
  flex: 1;
  min-height: 400px;
`;
const Panel = styled.aside`
  display: flex;
  flex-direction: column;
  flex: none;
  width: 147px;
  padding: 0 10px 6px 8px;
  border-right: 1px solid #7f8890;
  background: linear-gradient(#b0b0b0 0 41px, transparent 41px 85px, #b0b0b0 85px) 0 0 / 1px 100% no-repeat;
`;
const PanelTitle = styled.header`
  display: flex;
  align-items: center;
  justify-content: space-between;
  height: 28px;
  padding: 0 6px 0 3px;
  h2 { margin: 0; font-size: 12px; font-weight: 400; }
  button { width: 12px; height: 11px; margin-top: 3px; padding: 0; border: 1px solid #111; border-top-width: 2px; background: #fff; }
`;
const TreeBox = styled.div`
  display: flex;
  flex-direction: column;
  flex: 1;
  min-height: 0;
  border: 1px solid #d4d4d4;
  border-bottom: 0;
  padding-top: 1px;
`;
const ColumnHead = styled.button`
  display: flex;
  align-items: center;
  gap: 18px;
  height: 21px;
  padding: 0 0 0 6px;
  border: 0;
  border-bottom: 1px solid #c8c8c8;
  background: #f0f0f0;
  &::after {
    content: "";
    border: 5px solid transparent;
    border-bottom-color: #111;
    border-top: 0;
  }
`;
const Tree = styled.ul`
  flex: 1;
  min-height: 0;
  margin: 0;
  padding: 0;
  list-style: none;
  overflow: hidden;
`;
const Row = styled.li`
  display: flex;
  align-items: center;
  height: 20px;
  border-bottom: 1px solid #e6e6e6;
  background: ${(p) => (p.$alt ? "#f8f8f8" : "#fff")};
  font-weight: ${(p) => (p.$bold ? 700 : 400)};
  white-space: nowrap;
`;
const dotsDown = "repeating-linear-gradient(#8a8a8a 0 1px, transparent 1px 2px)";
const dotsAcross = "repeating-linear-gradient(90deg, #8a8a8a 0 1px, transparent 1px 2px)";
const rails = {
  none: "none",
  down: `${dotsDown} 9px 10px / 1px 10px no-repeat, ${dotsAcross} 9px 10px / 9px 1px no-repeat`,
  last: `${dotsDown} 9px 0 / 1px 10px no-repeat, ${dotsAcross} 9px 10px / 9px 1px no-repeat`,
  mid: `${dotsDown} 9px 0 / 1px 20px no-repeat, ${dotsAcross} 9px 10px / 9px 1px no-repeat`,
};
const Rail = styled.span`
  display: flex;
  align-items: center;
  justify-content: center;
  align-self: stretch;
  flex: none;
  width: 19px;
  background: ${(p) => rails[p.$kind]};
  margin-bottom: -1px;
`;
const Expander = styled.button`
  display: flex;
  width: 9px;
  height: 9px;
  padding: 1px;
  border: 1px solid #c8c8c8;
  background:
    linear-gradient(#111, #111) center / 5px 1px no-repeat,
    linear-gradient(#111, #111) center / ${(p) => (p.$open ? "0 0" : "1px 5px")} no-repeat,
    #fff;
`;
const Tick = styled.span`
  display: grid;
  margin: 0 1px 0 2px;
  input, svg { grid-area: 1 / 1; }
  input { appearance: none; width: 12px; height: 12px; margin: 0; border: 1px solid #000; background: #fff; }
  svg { visibility: hidden; pointer-events: none; }
  input:checked + svg { visibility: visible; }
`;
const NodeIcon = styled.svg`
  flex: none;
  margin: 0 3px 0 ${(p) => (p.$flush ? 0 : 1)}px;
`;

const MiniBox = ({ x, y, s }) => (
  <g transform={`translate(${x} ${y}) scale(${s})`} strokeLinejoin="round">
    <path d="M0 4L5 0L13 2V10L8 14L0 11z" fill="#8f6410" stroke="#9a6e14" />
    <path d="M0 4L5 0L13 2L8 6z" fill="#fff6c4" />
    <path d="M0 4L8 6V14L0 11z" fill="#fbd24e" />
    <path d="M8 6L13 2V10L8 14z" fill="#c08a1c" />
  </g>
);

const nodeArt = {
  folder: <><P d="M1 14V4h5l1 2h6v3" f="#d9a92c" s="#8a6108" w={1} /><P d="M1 14l3 -6h12l-3 6z" f="#ffe27a" s="#8a6108" w={1} /></>,
  assembly: <><MiniBox x={2} y={0.5} s={0.6} /><MiniBox x={1} y={8} s={0.55} /><MiniBox x={8} y={7} s={0.6} /></>,
  part: <MiniBox x={2} y={1} s={0.95} />,
  constraint: <><P d="M3 0v6l4 -3zM13 0v6l-4 -3z" f="#2420b8" s="#2420b8" w={1} /><P d="M8 0v16" s="#222" w={1} da="3 1" /><P d="M1 9h5v5h-5z" f="#f8e440" s="#8a7a10" w={1} /><P d="M10 8v6h5z" f="#a01818" s="#701010" w={1} /></>,
};

const nodes = [
  { id: "section", text: "截面", rails: ["down"], expander: "closed", tick: false, art: "folder" },
  { id: "assembly", text: "旋塞-装配体", rails: ["last"], expander: "open", tick: true, art: "assembly", bold: true },
  { id: "constraint", text: "约束", rails: ["none", "mid"], expander: "closed", art: "constraint" },
  { id: "valve", text: "阀体", rails: ["none", "mid"], tick: true, art: "part" },
  { id: "plug", text: "锥形塞", rails: ["none", "mid"], tick: true, art: "part" },
  { id: "washer", text: "垫圈", rails: ["none", "mid"], tick: true, art: "part" },
  { id: "cover", text: "压盖", rails: ["none", "mid"], tick: true, art: "part" },
  { id: "bolt", text: "螺栓 x 2", rails: ["none", "last"], tick: true, art: "part" },
];

const TreeNode = ({ node, alt }) => (
  <Row $alt={alt} $bold={node.bold}>
    {node.rails.map((kind, i) => (
      <Rail key={i} $kind={kind}>
        {node.expander && i === node.rails.length - 1 && (
          <Expander $open={node.expander === "open"} aria-label={`展开 ${node.text}`} />
        )}
      </Rail>
    ))}
    {node.tick !== undefined && (
      <Tick>
        <input id={node.id} type="checkbox" defaultChecked={node.tick} />
        <svg width="12" height="12" viewBox="0 0 12 12"><path d="M2 6l1 -1l2 3q2 -4 5 -6q-3 4 -4 8h-2z" fill="#e81010" stroke="#e81010" /></svg>
      </Tick>
    )}
    <NodeIcon width="16" height="16" viewBox="0 0 16 16" $flush={node.tick === undefined}>{nodeArt[node.art]}</NodeIcon>
    {node.tick !== undefined ? <label htmlFor={node.id}>{node.text}</label> : <span>{node.text}</span>}
  </Row>
);

const ScrollTrack = styled.div`
  display: flex;
  align-items: stretch;
  height: 16px;
  margin: 0 1px 2px 0;
  background: #f0f0f0;
  button { width: 17px; padding: 0; border: 0; background: transparent; display: grid; place-items: center; }
`;
const Thumb = styled.div`
  width: 20px;
  margin-right: auto;
  background: #cdcdcd;
`;
const PanelFoot = styled.div`
  height: 5px;
  border: 1px solid #a8a8a8;
  background: #dcdcdc;
`;

/* ---------- graphics window ---------- */

const Canvas = styled.section`
  position: relative;
  flex: 1;
  min-width: 0;
  overflow: hidden;
  background: linear-gradient(#b4b5b7, #d5d6d8 50%, #e6e8ea 86%, #e6e8ea);
`;
const Model = styled.svg`
  position: absolute;
  left: 313px;
  top: 95px;
`;
const Triad = styled.svg`
  position: absolute;
  left: 33px;
  bottom: 30px;
`;
const StatusLine = styled.footer`
  flex: none;
  height: 4px;
  display: flex;
  justify-content: flex-end;
  align-items: flex-end;
  gap: 4px;
  padding-right: 16px;
  background: #fff;
  i { height: 1px; width: 16px; background: #b4b4b4; }
  i + i { width: 5px; }
`;

const Bolt = ({ x, y }) => (
  <>
    <path d={`M${x} ${y + 16}l2 22l31 16l34 -4l18 -10v-24l-16 -13l-26 -4l-30 4z`} fill="#b06c00" />
    <path d={`M${x + 31} ${y + 28}v25l36 -4l18 -10v-22l-18 10z`} fill="#d88400" />
    <ellipse cx={x + 43} cy={y + 14} rx="39" ry="14" fill="#ffbc00" />
    <path d={`M${x} ${y + 16}l31 12l36 -2l18 -10M${x + 31} ${y + 28}v25`} fill="none" />
    <g fill="none" stroke="#4a68e0" strokeWidth="2">
      <circle cx={x + 61} cy={y + 39} r="20" />
      <circle cx={x + 61} cy={y + 39} r="14" />
      <path d={`M${x + 46} ${y + 32}h30M${x + 46} ${y + 46}h30M${x + 53} ${y + 24}v32M${x + 69} ${y + 24}v32`} />
    </g>
    <circle cx={x + 61} cy={y + 39} r="5" fill="#2c5cf0" stroke="none" />
  </>
);

export default function App() {
  return (
    <Shell>
      <Global />
      <TopStrip />
      <Bar as="nav">
        <StartButton>
          <svg width="4" height="16" viewBox="0 0 4 16"><path d="M0 0q4 2 3 7q-1 2 -3 3z" fill="#f3d04a" stroke="#b98d20" /><path d="M0 14h1" stroke="#777" strokeWidth="2" /></svg>
          启动
        </StartButton>
        <Tools items="v new open save | cut copy paste | undo v redo | save2 v | command |" />
        <SearchBox>
          <input type="text" placeholder="查找命令" aria-label="查找命令" />
          <svg width="18" height="16" viewBox="0 0 18 16"><circle cx="10" cy="6" r="5" fill="none" stroke="#333" /><circle cx="10" cy="6" r="3" fill="none" stroke="#aaa" /><path d="M6 9l-4 4" stroke="#333" strokeWidth="3" /><path d="M6 9l-4 4" stroke="#fff" /></svg>
        </SearchBox>
        <Tools items="end grip fit v orient v shaded v clip editclip v background v | exit enter end grip layerset layerview v csys v" />
      </Bar>
      <Bar as="nav">
        <Edge name="square" />
        <Tools items="v extrude revolve hole boss flange pocket | emboss pattern geometry mirror unite v subtract v intersect trimsheet splitbody trimbody v trimextend replace shell | blend blend2 chamfer draft facet end grip ruled mesh nsided enlarge xform more+ grip cutoff" />
      </Bar>
      <Bar as="nav">
        <Edge name="beam" />
        <Tools items="layers layercat | tag | block sketchcheck partcheck | annot end grip plane more grip coil spring wheel | springdel end grip datum table folderpts foldercirc note brush | fits end grip lockA lockB end grip line arc spline offsetcurve sheetA sheetB sheetC sheetD" />
      </Bar>
      <Bar as="nav" $compact $strong>
        <Combo $width={106} $after={8} $open>
          <select aria-label="选择过滤器"><option>选择过滤器</option></select>
        </Combo>
        <Combo $width={139} $after={5}>
          <select aria-label="选择范围"><option>整个装配</option></select>
        </Combo>
        <Tools compact items="selA | selB- selC v selD selE | marquee v | solid face | *snapAll *snapEnd *snapMid snapPole *snapKnot snapInt *snapCenter snapQuad *snapPoint *snapCurve snapFace | snapGrid" />
      </Bar>

      <Work>
        <Panel>
          <PanelTitle><h2>装配导航器</h2><button aria-label="最大化" /></PanelTitle>
          <TreeBox>
            <ColumnHead>描述性部件名</ColumnHead>
            <Tree>
              {nodes.map((n, i) => <TreeNode key={n.id} node={n} alt={i % 2 === 1} />)}
              {Array.from({ length: 10 }, (_, i) => <Row key={i} $alt={i % 2 === 1} aria-hidden="true" />)}
            </Tree>
            <ScrollTrack>
              <button aria-label="向左滚动"><svg width="8" height="8" viewBox="0 0 8 8"><path d="M6 1L2 4l4 3" fill="none" stroke="#444" strokeWidth="2" /></svg></button>
              <Thumb />
              <button aria-label="向右滚动"><svg width="8" height="8" viewBox="0 0 8 8"><path d="M2 1l4 3l-4 3" fill="none" stroke="#444" strokeWidth="2" /></svg></button>
            </ScrollTrack>
          </TreeBox>
          <PanelFoot />
        </Panel>

        <Canvas>
          <Model width="200" height="220" viewBox="0 0 600 660" stroke="#2e2818" strokeWidth="2.5" strokeLinejoin="round" role="img" aria-label="旋塞装配体">
            <path d="M66 213l36 -22l436 57l-96 54z" fill="#ffbc00" />
            <path d="M66 213l376 89l-11 290l-92 -19q-20 0 -22 20l-1 42l-153 -36v-52q-2 -14 -16 -18l-93 -24z" fill="#b06a00" />
            <path d="M442 302l96 -54l-11 292l-96 53z" fill="#d88400" />
            <path d="M317 635v-42q4 -20 22 -20l62 16z" fill="#d88400" />
            <path d="M317 593q6 -18 26 -19q-18 4 -22 14z" fill="#7a4a00" />
            <ellipse cx="481" cy="496" rx="22" ry="44" transform="rotate(8 481 496)" fill="#333" />
            <path d="M228 240q40 22 90 18l-40 -20z" fill="#b06a00" />
            <path d="M98 160l0 33l88 33l148 36l132 16l42 -28v-30z" fill="#b87000" />
            <path d="M466 246l42 -25v29l-42 28z" fill="#d88400" />
            <path d="M98 160l45 -24l130 10l185 46l50 29l-42 25l-132 -14l-148 -35z" fill="#ffbc00" />
            <path d="M187 197v29M334 232v30" fill="none" />
            <ellipse cx="305" cy="190" rx="33" ry="13" fill="#e29500" />
            <path d="M275 138h62l-2 52q-30 16 -62 0z" fill="#c87c00" stroke="none" />
            <path d="M275 136l2 -76l32 8v78z" fill="#b06a00" />
            <path d="M309 68l32 -12l-2 82l-30 8z" fill="#d88400" />
            <path d="M317 68v70M334 60v72" fill="none" />
            <path d="M277 60v-9l24 -8l40 11l-32 14z" fill="#ffbc00" />
            <Bolt x={151} y={125} />
            <Bolt x={371} y={178} />
          </Model>
          <Triad width="45" height="54" viewBox="540 24 135 162" role="img" aria-label="坐标系">
            <path d="M572 91l22 -12l42 12v48l-20 9l-44 -12z" fill="#c9c9cb" fillOpacity="0.8" stroke="#a2a2a4" strokeWidth="2" />
            <path d="M572 91l42 10l22 -10M614 101v47M594 79v45l42 14M594 124l-22 12" fill="none" stroke="#a2a2a4" strokeWidth="2" />
            <path d="M570 138l50 -26m-14 2l16 -4l-10 14" fill="none" stroke="#9cc8a4" strokeWidth="3" />
            <path d="M568 140V70" stroke="#1030d0" strokeWidth="7" />
            <path d="M568 60l7 22h-14z" fill="#1030d0" />
            <path d="M570 142l56 12" stroke="#c81818" strokeWidth="6" />
            <path d="M638 157l-22 2l4 -13z" fill="#c81818" />
            <circle cx="564" cy="141" r="12" fill="#c4c4c4" stroke="#888" strokeWidth="2" />
            <Letters x={558} y={60} size={32} c="#1840e0">Z</Letters>
            <Letters x={641} y={173} size={31} c="#d02020">X</Letters>
          </Triad>
        </Canvas>
      </Work>

      <SketchBar as="nav">
        <Tools items="grip sketch flag" />
        <SketchLabel disabled>完成草图</SketchLabel>
        <Tools items="profile sline sarc circle fillet schamfer rect sspline plus offset v | trim extend corner | rapid v | constr symmetric showconstr v | editA editB editC" />
      </SketchBar>
      <Bar as="nav" $strong>
        <Edge name="arrow" />
        <Tools items="v wire window add v move mirrorasm asmconstr | wrench scatter sequence | product | chain link relations | clearance- v end" />
      </Bar>
      <StatusLine><i /><i /><i /></StatusLine>
    </Shell>
  );
}
